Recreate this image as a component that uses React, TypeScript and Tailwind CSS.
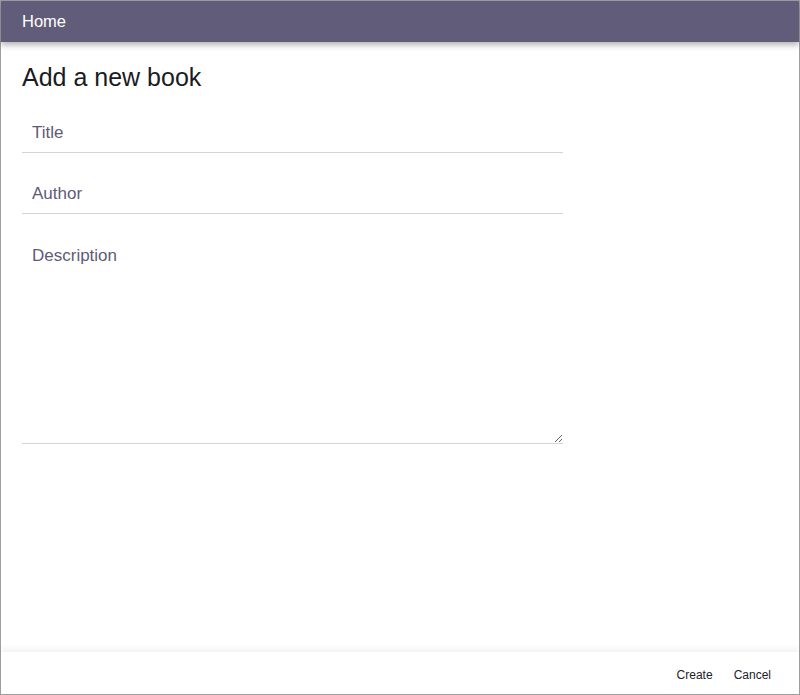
import { useState } from "react";

export default function App() {
  const [title, setTitle] = useState("");
  const [author, setAuthor] = useState("");
  const [description, setDescription] = useState("");

  return (
    <div className="flex h-[695px] w-[800px] flex-col border border-[#a0a0a4] bg-white font-['Liberation_Sans',Arial,sans-serif]">
      <header className="relative z-10 flex h-[41px] shrink-0 items-center bg-[#615c7a] px-[21px] shadow-[0_3px_6px_rgba(0,0,0,0.3)]">
        <span className="text-[16.5px] text-white">Home</span>
      </header>

      <main className="flex-1 px-[21px] pt-[19px]">
        <h1 className="text-[25px] leading-[32px] text-[#1b1b22]">Add a new book</h1>

        <form className="mt-[20px] flex w-[541px] flex-col gap-[21px]">
          <input
            value={title}
            onChange={(e) => setTitle(e.target.value)}
            placeholder="Title"
            className="h-[40px] border-b border-[#d4d4d8] px-[10px] pt-[1px] text-[17px] text-[#1b1b22] outline-none placeholder:text-[#5f5a78]"
          />
          <input
            value={author}
            onChange={(e) => setAuthor(e.target.value)}
            placeholder="Author"
            className="h-[40px] border-b border-[#d4d4d8] px-[10px] pt-[1px] text-[17px] text-[#1b1b22] outline-none placeholder:text-[#5f5a78]"
          />
          <textarea
            value={description}
            onChange={(e) => setDescription(e.target.value)}
            placeholder="Description"
            className="h-[209px] border-b border-[#d4d4d8] px-[10px] pt-[11px] text-[17px] leading-[20px] text-[#1b1b22] outline-none placeholder:text-[#5f5a78]"
          />
        </form>
      </main>

      <footer className="flex h-[42px] shrink-0 items-center justify-end gap-[21px] bg-white pt-[3px] pr-[28px] shadow-[0_-3px_6px_rgba(0,0,0,0.06)]">
        <button type="button" className="text-[12px] text-[#222228]">
          Create
        </button>
        <button type="button" className="text-[12px] text-[#222228]">
          Cancel
        </button>
      </footer>
    </div>
  );
}
